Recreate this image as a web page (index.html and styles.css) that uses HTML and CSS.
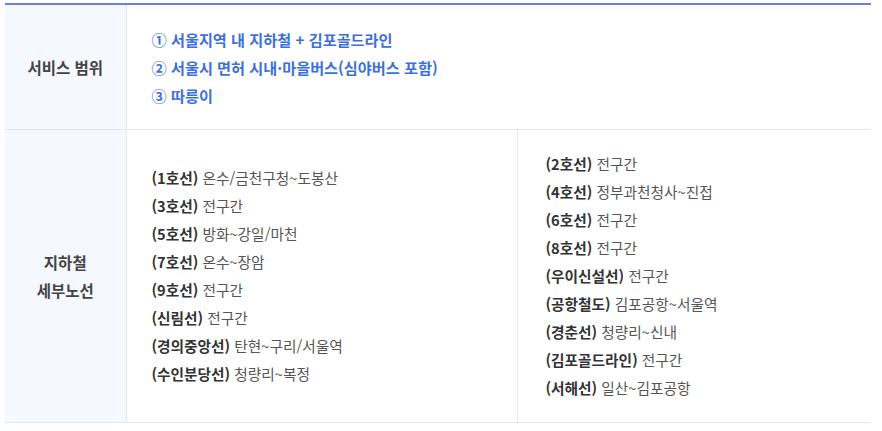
FILE: index.html
```html
<!DOCTYPE html>
<html lang="ko">
<head>
  <meta charset="UTF-8" />
  <meta name="viewport" content="width=device-width, initial-scale=1.0" />
  <title>이용 범위</title>
  <link rel="stylesheet" href="styles.css">
</head>
<body>
  <!-- Service range table -->
  <table class="info-table">
    <colgroup>
      <col class="col-head" />
      <col class="col-left" />
      <col />
    </colgroup>
    <tr>
      <th>서비스 범위</th>
      <td colspan="2" class="scope">
        <ul class="list">
          <li>① 서울지역 내 지하철 + 김포골드라인</li>
          <li>② 서울시 면허 시내·마을버스(심야버스 포함)</li>
          <li>③ 따릉이</li>
        </ul>
      </td>
    </tr>
    <tr>
      <th>지하철<br />세부노선</th>
      <td class="lines">
        <ul class="list">
          <li><b>(1호선)</b> 온수/금천구청~도봉산</li>
          <li><b>(3호선)</b> 전구간</li>
          <li><b>(5호선)</b> 방화~강일/마천</li>
          <li><b>(7호선)</b> 온수~장암</li>
          <li><b>(9호선)</b> 전구간</li>
          <li><b>(신림선)</b> 전구간</li>
          <li><b>(경의중앙선)</b> 탄현~구리/서울역</li>
          <li><b>(수인분당선)</b> 청량리~복정</li>
        </ul>
      </td>
      <td class="lines right">
        <ul class="list">
          <li><b>(2호선)</b> 전구간</li>
          <li><b>(4호선)</b> 정부과천청사~진접</li>
          <li><b>(6호선)</b> 전구간</li>
          <li><b>(8호선)</b> 전구간</li>
          <li><b>(우이신설선)</b> 전구간</li>
          <li><b>(공항철도)</b> 김포공항~서울역</li>
          <li><b>(경춘선)</b> 청량리~신내</li>
          <li><b>(김포골드라인)</b> 전구간</li>
          <li><b>(서해선)</b> 일산~김포공항</li>
        </ul>
      </td>
    </tr>
  </table>
</body>
</html>
```

FILE: styles.css
```css
body { margin: 0; background: #fff; font-family: "Noto Sans CJK KR", "Noto Sans", sans-serif; font-size: 15px; color: #555; }
.info-table { margin: 3px 0 0 5px; width: 866px; border-collapse: collapse; border-top: 2px solid #6a80e0; table-layout: fixed; }
.col-head { width: 121px; }
.col-left { width: 391px; }
.info-table th { background: #f5f9ff; color: #444; font-size: 15.5px; font-weight: bold; text-align: center; border-right: 1px solid #e6e6e6; border-bottom: 1px solid #e6e6e6; line-height: 28px; }
.info-table td { border-bottom: 1px solid #e6e6e6; padding: 20px 25px; vertical-align: middle; }
.info-table td.right { border-left: 1px solid #e6e6e6; padding-left: 28px; }
.list { list-style: none; margin: 0; padding: 0; }
.list li { line-height: 28px; white-space: nowrap; }
.scope .list li { color: #3d6fdb; font-size: 15.2px; font-weight: bold; }
.lines .list li { font-size: 14.7px; }
.lines b { color: #333; }
```
